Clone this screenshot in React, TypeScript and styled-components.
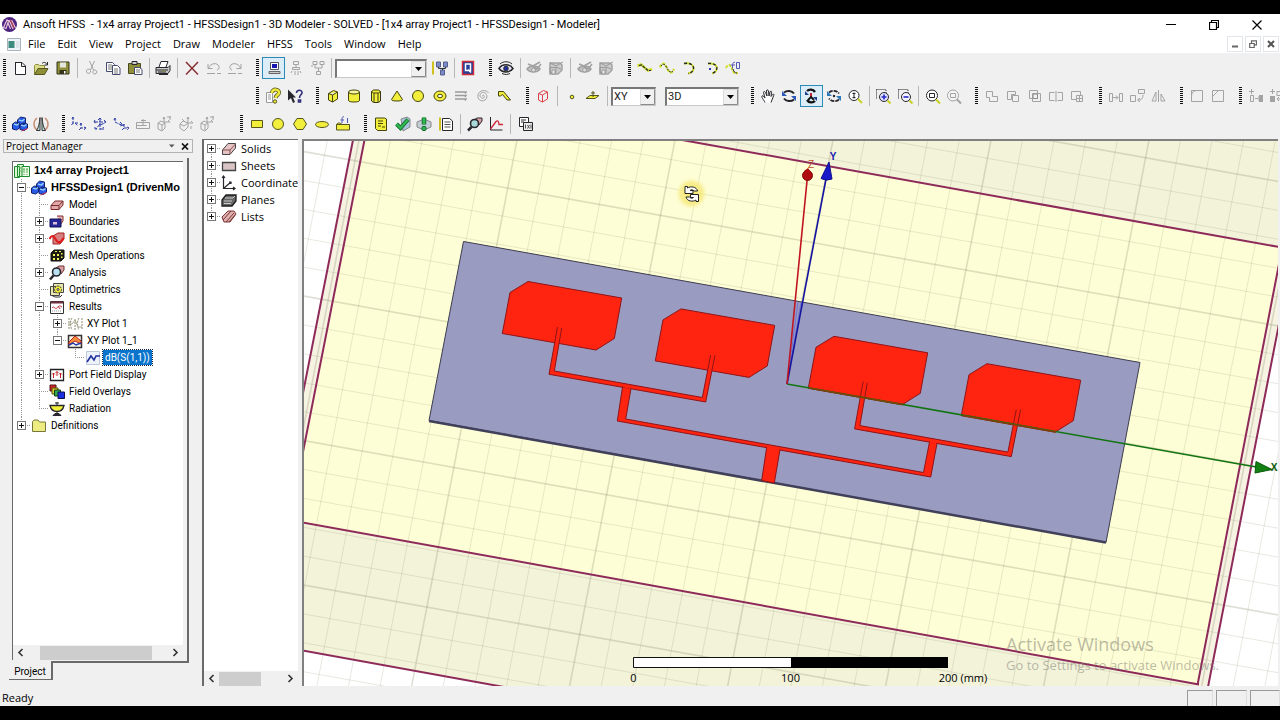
import React from "react";
import styled, { createGlobalStyle, css } from "styled-components";

const Global = createGlobalStyle`
  * { box-sizing: border-box; }
  body { margin: 0; background: #000; overflow: hidden; }
  button { font: inherit; color: inherit; background: none; border: 0; padding: 0; margin: 0; }
  ul { list-style: none; margin: 0; padding: 0; }
`;

const ui = `"Open Sans", "Noto Sans", sans-serif`;
const classic = `Roboto, "Liberation Sans", sans-serif`;

/* ---------- window frame ---------- */

const Screen = styled.div`
  height: 100vh;
  padding: 14px 0;
  background: #000;
  display: flex;
  flex-direction: column;
  font: 11px/14px ${ui};
  color: #000;
  overflow: hidden;
`;
const TitleBar = styled.header`
  flex: none;
  height: 21px;
  background: #fff;
  display: flex;
  align-items: center;
  padding: 0 2px 0 1px;
`;
const Title = styled.h1`
  flex: 1;
  margin: 0 0 0 5px;
  font: 400 11px/20px ${classic};
  white-space: pre;
`;
const WindowButton = styled.button`
  width: 43px;
  height: 20px;
  display: grid;
  place-items: center;
`;
const MenuBar = styled.nav`
  flex: none;
  height: 18px;
  background: #fff;
  display: flex;
  align-items: center;
  padding-left: 7px;
  padding-right: 1px;
`;
const Menus = styled.div`
  flex: 1;
  display: flex;
  gap: 12px;
  padding-left: 7px;
  line-height: 18px;
`;
const ChildButton = styled.button`
  width: 16px;
  height: 16px;
  margin-left: 2px;
  border: 1px solid #e2e6ea;
  display: grid;
  place-items: center;
`;

/* ---------- toolbars ---------- */

const ToolArea = styled.div`
  flex: none;
  background: #f0f0f0;
  padding: 1px 0 1px;
  height: 86px;
`;
const ToolRow = styled.div`
  height: 28px;
  display: flex;
  align-items: center;
  overflow: hidden;
`;
const ToolGroup = styled.div<{ $width: number; $before?: number }>`
  flex: none;
  width: ${(p) => p.$width}px;
  margin-left: ${(p) => p.$before ?? 0}px;
  height: 22px;
  display: flex;
  align-items: center;
`;
const Grip = styled.span`
  flex: none;
  width: 3px;
  height: 18px;
  margin: 0 3px;
  background: repeating-linear-gradient(#111 0 1px, #f0f0f0 1px 2px);
`;
const ToolButton = styled.button<{ $active?: boolean }>`
  flex: 1 1 0;
  min-width: 0;
  height: 22px;
  display: flex;
  align-items: center;
  justify-content: center;
  ${(p) => p.$active && css`background: #dcedf8; border: 1px solid #2a8ab8;`}
  svg { flex: none; }
`;
const Divider = styled.span`
  flex: none;
  width: 1px;
  height: 20px;
  margin: 0 3px;
  background: #b8b8b8;
`;
const Combo = styled.label<{ $width: number; $after?: number }>`
  flex: none;
  position: relative;
  width: ${(p) => p.$width}px;
  margin-right: ${(p) => p.$after ?? 0}px;
  height: 19px;
  border: 1px solid #c8c8c8;
  border-top: 2px solid #777;
  border-left: 2px solid #777;
  background: #fff;
  select {
    appearance: none;
    display: block;
    width: 100%;
    height: 16px;
    border: 0;
    padding: 0 0 0 1px;
    background: #fff;
    color: #222;
    font: 11px/16px ${classic};
  }
  svg {
    position: absolute;
    right: 0;
    top: 0;
    pointer-events: none;
  }
`;

/* ---------- workspace ---------- */

const Workspace = styled.main`
  flex: 1;
  min-height: 0;
  display: flex;
  background: #f0f0f0;
`;
const ProjectPane = styled.section`
  flex: none;
  width: 202px;
  display: flex;
  flex-direction: column;
  padding: 0 9px 7px 3px;
`;
const PaneHeader = styled.h2`
  margin: 0;
  height: 14px;
  flex: none;
  display: flex;
  align-items: center;
  gap: 6px;
  padding: 0 3px 0 2px;
  border: 1px solid #b4b4b4;
  font-size: 10px;
  line-height: 12px;
  font-weight: 400;
  span { flex: 1; }
  button { display: grid; place-items: center; }
`;
const TabFrame = styled.div`
  flex: 1;
  min-height: 0;
  display: flex;
  margin: 5px 4px 0 6px;
  padding: 3px 4px 1px 3px;
  border-right: 2px solid #6a6a6a;
  border-bottom: 2px solid #6a6a6a;
`;
const TreeBox = styled.div<{ $edge?: number }>`
  flex: 1;
  min-width: 0;
  display: flex;
  flex-direction: column;
  background: #fff;
  border-left: ${(p) => p.$edge ?? 1}px solid #6a6a6a;
  border-top: 1px solid #6a6a6a;
  overflow: hidden;
`;
const Tree = styled.ul`
  flex: 1;
  min-height: 0;
  overflow: hidden;
`;
const PaneTab = styled.button`
  flex: none;
  align-self: flex-start;
  width: 44px;
  height: 19px;
  margin: -2px 0 0 6px;
  padding-top: 3px;
  border-right: 2px solid #6a6a6a;
  border-bottom: 1px solid #6a6a6a;
  background: #f0f0f0;
  font: 10px/15px ${classic};
`;
const ModelPane = styled.section`
  flex: none;
  width: 100px;
  display: flex;
  padding-right: 4px;
  padding-bottom: 1px;
`;

const TreeRow = styled.li<{ $level: number; $font: "classic" | "ui" }>`
  display: flex;
  align-items: center;
  height: 17px;
  padding-left: ${(p) => (p.$level === 0 ? 1 : p.$font === "ui" ? 3 : 4)}px;
  white-space: nowrap;
  font: ${(p) => (p.$font === "ui" ? `11px/15px ${ui}` : `10px/15px ${classic}`)};
  & > svg { flex: none; }
`;
const Guide = styled.span<{ $kind: "line" | "tee" | "ell" | "none"; $own?: boolean; $first?: boolean }>`
  flex: none;
  width: ${(p) => (p.$own ? 14 : 18)}px;
  height: 17px;
  display: flex;
  align-items: center;
  background-repeat: no-repeat;
  ${(p) =>
    p.$kind !== "none" &&
    css`
      background-image:
        repeating-linear-gradient(#999 0 1px, transparent 1px 2px),
        repeating-linear-gradient(90deg, #999 0 1px, transparent 1px 2px);
      background-position: 4px ${p.$first ? 8 : 0}px, 4px 8px;
      background-size: 1px ${p.$kind === "ell" ? 8 : 17}px, ${p.$own ? 10 : 0}px 1px;
    `}
`;
const Expander = styled.button`
  width: 9px;
  height: 9px;
  border: 1px solid #777;
  background: #fff;
  display: grid;
  place-items: center;
`;
const Label = styled.span<{ $bold?: boolean; $selected?: boolean }>`
  margin-left: 4px;
  ${(p) => p.$bold && css`font: 700 11px/15px "Liberation Sans", sans-serif;`}
  ${(p) =>
    p.$selected &&
    css`
      margin-left: 2px;
      padding: 0 2px;
      background: #0a74cc;
      color: #fff;
      outline: 1px dotted #124;
    `}
`;

const Scroll = styled.div`
  flex: none;
  height: 15px;
  display: flex;
  align-items: center;
  background: #f0f0f0;
`;
const ScrollArrow = styled.button`
  flex: none;
  width: 15px;
  height: 15px;
  display: grid;
  place-items: center;
`;
const Thumb = styled.span<{ $before: number; $width: number }>`
  flex: none;
  width: ${(p) => p.$width}px;
  height: 14px;
  margin-left: ${(p) => p.$before}px;
  margin-right: auto;
  background: #cdcdcd;
`;

const Viewport = styled.section`
  flex: 1;
  min-width: 0;
  position: relative;
  margin: 0 2px 1px 0;
  border-left: 2px solid #808080;
  border-top: 2px solid #808080;
  background: #fff;
  overflow: hidden;
  & > svg { display: block; width: 100%; height: 100%; }
`;
const Watermark = styled.div`
  position: absolute;
  right: 0;
  bottom: 12px;
  width: 272px;
  color: rgba(120, 120, 110, 0.5);
  font-size: 13px;
  line-height: 18px;
  white-space: nowrap;
  strong { display: block; font-weight: 400; font-size: 18px; line-height: 24px; }
`;

const StatusBar = styled.footer`
  flex: none;
  height: 19px;
  display: flex;
  align-items: center;
  gap: 3px;
  padding: 2px 0 0 2px;
  background: #f0f0f0;
  span { flex: 1; line-height: 16px; }
`;
const StatusCell = styled.div<{ $width: number }>`
  width: ${(p) => p.$width}px;
  height: 16px;
  border-left: 1px solid #999;
  border-top: 1px solid #999;
  border-right: 1px solid #ddd;
`;

/* ---------- icons, drawn on an 18 x 18 grid ---------- */

const K = "#26262c";
const G = "#a3a3a3";
const Y = "#f2ee3c";
const O = "#8f8f3a";
const B = "#2b3aa8";

const shapes: Record<string, React.ReactNode> = {
  new: <path d="M4 3.500h7l3.500 3.500v8.500H4.500V3.500M10.500 3.500v4h4" stroke={K} fill="#fff" />,
  open: <><path d="M2.500 15V6.500l1-1h3l1 1h5V9" stroke={O} fill="#dcdc8c" /><path d="M2.500 15.500L6 9.500h10l-3.500 6z" stroke="#55551c" fill={O} /><path d="M10 4.500c2-2 4-1 5 1M15.500 3v3h-3" stroke={K} /></>,
  save: <><path d="M3 3h12v12H3z" fill={O} stroke="#33331c" /><path d="M6 3.500h6v5H6z" fill="#e6e6e0" /><path d="M5.500 11h7v4h-7z" fill="#33331c" /><path d="M10 12h1.500v2.500H10z" fill="#fff" /></>,
  cut: <path d="M6.500 2l4 9M11.500 2l-4 9M7.500 11.500a2 2 0 1 1-4 1.500a2 2 0 0 1 4-1.500zM10.500 11.500a2 2 0 1 1 0 3a2 2 0 0 1 0-3z" stroke={G} />,
  copy: <><path d="M2.500 3.500h6l2 2v7h-8z" fill="#fff" stroke="#444a70" /><path d="M4 6h4M4 8h4M4 10h4" stroke="#777" /><path d="M8.500 6.500h5l2.500 2.500v6.500H8.500z" fill="#fff" stroke="#444a70" /><path d="M10 10h4M10 12h4M10 14h4" stroke="#777" /></>,
  paste: <><path d="M2.500 4.500h12v10h-12z" fill={O} stroke="#4a4a20" /><path d="M6 2.500h5v3H6z" fill="#ccc" stroke={K} /><path d="M8.500 8.500h5l2.500 2v5H8.500z" fill="#fff" stroke="#444a70" /><path d="M10 11h4M10 13h4" stroke="#777" /></>,
  print: <><path d="M5 8l2-5.500h7L12 8" fill="#fff" stroke={K} /><path d="M2 8.500h12l2-2v5l-2 3H2z" fill="#c8c8c8" stroke={K} /><path d="M2.500 11h11.500M4 13h8M5 15.500h9" stroke={K} /><path d="M8 12h3" stroke={O} /></>,
  del: <path d="M3 3l12 12.500M15 3L3 15.500" stroke="#863034" strokeWidth="1.500" />,
  undo: <path d="M3 5v4.500h4.500M3.500 9c2-5 9-6 10.500-1.500c.5 2-.5 3-2 3.500M2 14.500h8M12 14.500h4" stroke={G} />,
  redo: <path d="M15 5v4.500h-4.500M14.500 9c-2-5-9-6-10.500-1.500c-.5 2 .5 3 2 3.500M2 14.500h8M12 14.500h4" stroke={G} />,
  monitor: <><path d="M5.500 3.500h8v7h-8z" fill="#fff" stroke="#555" /><path d="M7 5h5v4H7z" fill="#1717b0" /><path d="M4 12.500h11v2H4z" fill="#ccc" stroke="#666" /></>,
  net1: <path d="M6.500 2.500h5v3h-5zM9 6v2M5.500 8.500h7v2h-7zM5 12l-1 2M8 12v4M11 12v4M13 12l1 2" stroke={G} />,
  net2: <path d="M4 2.500h4v3H4zM11 2.500h4v3h-4zM6 6v3h7V6M9.500 9v3M7.500 12.500h4v3h-4zM2 7h2" stroke={G} />,
  tree: <><path d="M2 2.500v13" stroke="#d0c020" strokeWidth="2" /><path d="M5.500 3h4v5h-4zM12.500 3h4v5h-4zM9.500 11h4v5h-4z" fill="#7d8cc8" stroke="#55608c" /><path d="M7.500 8v1.500h7V8M11.500 9.500V11" stroke="#333" /></>,
  queue: <><path d="M3.500 2.500h11v13h-11z" fill="#26409a" stroke="#d02a36" strokeWidth="1.400" /><path d="M6.500 5h5v6.500h-5zM9 10.500l3 3" stroke="#fff" strokeWidth="1.500" /></>,
  eye: <><path d="M2 9.500c3-5 11-5 14 0c-3 4.500-11 4.500-14 0z" fill="#e6e6f4" stroke={K} strokeWidth="1.500" /><circle cx="9" cy="9.500" r="2.300" fill="#2030a0" stroke={K} /><path d="M3 5c3-3 9-3 12 0M5 14.500c3 1.500 6 1 8 0" stroke={K} /></>,
  eyeOff: <><path d="M2 10c3-4 10-4 13 0c-3 4-10 4-13 0z" fill="#c4c4c4" stroke={G} strokeWidth="1.500" /><path d="M3 5l5 2l7-4M8 8l4 2l4-5" stroke="#a0a0a0" strokeWidth="1.500" /><circle cx="8.500" cy="11" r="2" fill="#ddd" stroke="#999" /></>,
  eyeBox: <><path d="M3 4h10l2 2v5l-4 4H3z" fill="#ccc" stroke={G} strokeWidth="1.500" /><path d="M3 4l6 3l7-4M3 8.500h6v5H3zM9 8l5 2" stroke="#999" /><path d="M5 11h3v4H5z" fill="#eee" stroke="#999" /></>,
  line1: <><path d="M1.500 7l3.500-1.500l7 6l4-1.500" stroke="#cfdd28" strokeWidth="2.500" /><path d="M3 6.500l2.500-.5l6.500 5.500h3" stroke={K} strokeWidth="1.200" strokeDasharray="3 1" /></>,
  line2: <><path d="M2 8.500C4 3 7 4 9 9s5 6 7 1" stroke="#cfdd28" strokeWidth="2.300" strokeDasharray="3 1" /><path d="M3 7C5 4 7 5 9 9s4 5 6 3" stroke={K} strokeDasharray="2 1" /></>,
  arc1: <><path d="M4 4.500c12-2 12 9 4 10" stroke="#cfdd28" strokeWidth="2" /><path d="M4 4.500c12-2 12 9 4 10" stroke={K} strokeWidth="1.300" strokeDasharray="3 2" /></>,
  arc2: <><path d="M6 4.500c11-1 11 8 4 10" stroke="#cfdd28" strokeWidth="2" /><path d="M6 4.500c11-1 11 8 4 10" stroke={K} strokeWidth="1.300" strokeDasharray="3 2" /><path d="M7 9h2v2H7z" fill={B} /></>,
  eq: <><path d="M2 9c2-5 5-3 6 1s3 5 6 4" stroke="#cfdd28" strokeWidth="2" strokeDasharray="3 1" /><path d="M11 3.500c-2.500-1-2.500 2-2.500 6M6.500 6h4.500M12.500 3.500h3v6h-3z" stroke="#5058b8" /><path d="M9 10c1 3 2 4 4 4" stroke={K} /></>,
  noteHelp: <><path d="M2.500 5.500h6v10h-6zM4 8h3M4 10h3M4 12h3" stroke="#999" fill="#fff" /><path d="M8 6c0-5 8-4 7 0c-1 2.500-3 2-3.500 5" stroke="#55551c" strokeWidth="4" /><path d="M8 6c0-5 8-4 7 0c-1 2.500-3 2-3.500 5" stroke="#f0e83c" strokeWidth="2.500" /><circle cx="11" cy="14.500" r="1.700" fill="#f0e83c" stroke="#55551c" /></>,
  ptrHelp: <><path d="M2 2.500v11l3-2.500l2 5l2-1l-2-4.500h3z" fill={K} /><path d="M10.500 6c0-4 6-3.500 5.500 0c-.5 2-2.500 2-2.500 5M12.500 13h2v2h-2z" stroke="#2e2e78" strokeWidth="1.600" /></>,
  box: <path d="M4.500 6.500l5-3l4 1.500v7l-5 3l-4-2zM4.500 6.500l4 1.500l5-3M8.500 8v7" fill={Y} stroke="#44440c" />,
  cyl: <><path d="M3.500 5v8.500c0 2 11 2 11 0V5" fill={Y} stroke="#44440c" /><ellipse cx="9" cy="5" rx="5.500" ry="2" fill="#f6f6a0" stroke="#44440c" /></>,
  prism: <><path d="M4.500 4.500l2-1.500h5l2 1.500V14l-2 1.500h-5l-2-1.500z" fill={Y} stroke="#3a3a10" /><path d="M4.500 4.500L6.500 6h5l2-1.500M7 6v9M11 6v9" stroke="#3a3a10" /></>,
  cone: <path d="M9 4L3.500 12.500c0 2 11 2 11 0z" fill={Y} stroke="#44440c" />,
  ball: <circle cx="9" cy="9" r="5.500" fill={Y} stroke="#44440c" />,
  torus: <><ellipse cx="9" cy="9" rx="6" ry="5" fill={Y} stroke="#44440c" /><ellipse cx="9" cy="9" rx="2.500" ry="1.700" fill="#fff" stroke="#44440c" /></>,
  helix: <path d="M3 5h11l-1 1.500M3 8.500h11l-1 1.500M3 12h11l-1 1.500" stroke="#999" strokeWidth="1.400" />,
  spiral: <path d="M9 9.500c-1-.5 0-2 1-1c1.500 1.500-1 3.500-2.500 2.500c-3-2-1-6 2-5.500c4 .5 4.500 5.500 1.500 7.500c-4 2.500-8-1-7-5C5 3 12 2 14.500 6" stroke={G} />,
  bond: <path d="M3.500 9V4.500h5l7 8.500h-3.500L7.500 7.500L5.500 9z" fill={Y} stroke="#44440c" />,
  redBox: <path d="M4.500 6.500l5-3l4 1.500v7l-5 3l-4-2zM4.500 6.500l4 1.500l5-3M8.500 8v7" stroke="#e0404c" />,
  dot: <circle cx="9" cy="10" r="1.800" fill={Y} stroke="#55551c" />,
  plane: <><path d="M2 11.500h9l4-3H6z" fill={Y} stroke="#55551c" /><path d="M9 4v6M7 6h4" stroke="#55551c" /></>,
  hand: <path d="M6 15.500C5 13 2 10 3 9s2 1 3 2L4.500 5.500c0-1.500 1.500-1 2 0L8 9L7.500 4c0-1.500 1.500-1.500 2 0L10 9l1-4c.5-1.500 2-1 1.500.5L12 9.500l1.500-2c1-1 2 0 1 1.500L12 15.500" fill="#fff" stroke={K} />,
  rot1: <><path d="M4 5.500c3-2.500 8-2 10 1M14 12.500c-3 2.500-8 2-10-1" stroke={K} strokeWidth="2" /><path d="M2 4v5h5zM16 14V9h-5z" fill="#2c58b8" /></>,
  rot2: <><path d="M5 4c2-2 6-2 8 1M13 14c-2 2-6 2-8-1" stroke="#111" strokeWidth="2.400" /><path d="M9 6v4" stroke="#c02430" strokeWidth="2" /><path d="M6 13l3-3l3 3" stroke="#111" strokeWidth="1.800" /><path d="M3 4v4h4zM15 14v-4h-4z" fill="#1c3c90" /></>,
  rot3: <><path d="M4 5.500c3-2.500 8-2 10 1M14 12.500c-3 2.500-8 2-10-1" stroke={K} strokeWidth="1.700" strokeDasharray="4 1" /><path d="M2 4v5h5zM16 14V9h-5z" fill="#2c78b8" /><circle cx="9" cy="9" r="1.200" fill={K} /></>,
  zoomDyn: <><circle cx="8" cy="8.500" r="5" fill="#fff" stroke={K} /><path d="M8 5.500v6M6.500 6.500h3M6.500 10.500h3" stroke={K} /><path d="M12 12l4 4" stroke="#c8d020" strokeWidth="2" /></>,
  zoomIn: <><path d="M2.500 2.500h9M2.500 2.500v9M12 3v3" stroke={K} strokeDasharray="1 1" /><circle cx="10" cy="10" r="4.500" fill="#dfe2ff" stroke={K} /><path d="M7.500 10h5M10 7.500v5" stroke="#2828c8" strokeWidth="1.600" /><path d="M13.500 13.500l3 3" stroke="#c8d020" strokeWidth="2" /></>,
  zoomOut: <><path d="M2.500 2.500h9M2.500 2.500v9M12 3v3" stroke={K} strokeDasharray="1 1" /><circle cx="10" cy="10" r="4.500" fill="#f4f4ff" stroke={K} /><path d="M7.500 10h5" stroke="#2828c8" strokeWidth="1.600" /><path d="M13.500 13.500l3 3" stroke="#c8d020" strokeWidth="2" /></>,
  fit: <><circle cx="8" cy="8.500" r="5.500" fill="#fff" stroke={K} /><path d="M5.500 6.500h5v4h-5z" stroke={K} /><path d="M12 12.500l4 4" stroke="#c8d020" strokeWidth="2" /></>,
  fitOff: <><circle cx="8" cy="8.500" r="5.500" fill="#f4f4f4" stroke={G} /><path d="M5.500 6.500h5v4h-5z" stroke={G} /><path d="M12 12.500l4 4" stroke={G} strokeWidth="2" /></>,
  unite: <path d="M3.500 4.500h6v5h5v5h-8v-4h-3z" stroke={G} />,
  subtract: <path d="M3.500 4.500h8v3h-4v5h-4zM8.500 8.500h6v6h-6z" stroke={G} />,
  intersect: <><path d="M3.500 3.500h8v8h-8zM6.500 6.500h8v8h-8z" stroke={G} /><path d="M7 7h4.500v4.500H7z" stroke="#8a8a8a" /></>,
  split: <path d="M7.500 5.500h-5v8h5M10.500 5.500h5v8h-5M9 4v11" stroke={G} />,
  imprint: <path d="M12.500 8V4.500h-9v8h5M8.500 8.500h6v6h-6zM11.500 8.500v6M8.500 11.500h6" stroke={G} />,
  move: <path d="M2.500 6.500h3v8h-3zM12.500 6.500h3v8h-3zM6 10.500h5M9 8.500l2 2l-2 2" stroke={G} />,
  rotate: <path d="M2.500 8.500h5v6h-5zM10.500 2.500h6v4h-6zM15 8c0 4-2 5-5 5M12 11l-2.500 2l2.500 2" stroke={G} />,
  mirror: <path d="M9.500 3v12M7 5v9H3zM12 7v7h4z" stroke={G} />,
  fillet: <path d="M3.500 3.500h11v11h-11zM3.500 9.500c0-4 2-6 6-6" stroke={G} />,
  chamfer: <path d="M3.500 3.500h11v11h-11zM3.500 9.500l6-6" stroke={G} />,
  dupLine: <><path d="M2 4.500h5M4.500 2v5M3.500 8.500h3v6h-3zM8 11.500h3M12 9v5" stroke={G} /><path d="M12 8h4v7h-4z" fill={G} /></>,
  dupAxis: <><path d="M2 4.500h5M4.500 2v5M9 4.500h6v4H9zM14 12H9M11 10l-2 2l2 2" stroke={G} /><path d="M2 9h5v6H2z" fill={G} /></>,
  cubes: <><path d="M1.500 9l3-2l4 1v5l-3 2l-4-1zM6.500 5l3-3l5 1v5l-3 2l-5-1zM9 10l3-2l4.500 1v4l-3 2.500l-4.500-1z" fill="#2a5ae8" stroke="#152270" /><path d="M3 9.200l3 .8L8 8.500M8 5.200l3.500 .8L13.500 4M10 10.200l3.500 .8L15.500 9.500" stroke="#9ad8f8" strokeWidth="1.200" /><path d="M10.500 16l6-2.500" stroke="#c03050" /></>,
  mirrorIcon: <><path d="M5 3C1 6 1 12 5 15M13 3c4 3 4 9 0 12" stroke="#c89078" strokeWidth="1.500" /><path d="M8 2.500v13H4.500c2-3 3-7 3.500-13zM10 2.500v13h3.500c-2-3-3-7-3.500-13z" fill="#bce0e0" stroke="#333" /></>,
  cs1: <path d="M3 2v6h5M2 4l1-2l1 2M3 8l-1.500 2M5 8l3 3M11 8v5h5M10 10l1-2l1 2M11 13l-2 2M14 12l2 1l-2 2" stroke={B} strokeDasharray="3 1" />,
  cs2: <path d="M9 3v12M7 5l2-2l2 2M3 7h11M4 5L3 7l2 1M13 5l2 2l-2 1M9 10l5-2M9 9l-4 5M4 12v2h3M9 14h4l-1-2" stroke={B} strokeDasharray="4 1" />,
  cs3: <path d="M2 3v4l4 2M1 5l1-2l1 2M6 9l3 1M7 7l3 3l-3 1M11 9v4h5M10 11l1-2M14 12l2 1l-2 2M11 13l-2 2" stroke={B} strokeDasharray="3 1" />,
  csFace: <path d="M2.500 7.500h13v6h-13zM9 4v7M7 5.500h5M2.500 10.500h10" stroke={G} />,
  csObj1: <><path d="M3 8l3-2l4 2v5l-3 3l-4-2zM3 8l4 2l3-2M7 10v5" stroke={G} /><path d="M9 2v5h6M8 4l1-2l1 2M13 5l2 2M12 2h4M15 1v4" stroke={G} /></>,
  csObj2: <><path d="M3 9l3-3l5 2v4l-4 4l-4-3zM3 9l4 2l4-3" stroke={G} /><path d="M11 2v6h5M10 4l1-2l1 2M14 6l2 2M5 4l3 3M14 11v3" stroke={G} /></>,
  rect: <path d="M3.500 5.500h11v7h-11z" fill={Y} stroke="#55551c" />,
  circle: <circle cx="9" cy="9" r="5.500" fill={Y} stroke="#55551c" />,
  hexagon: <path d="M6 3.500h6l3.500 5.500l-3.500 5.500H6L2.500 9z" fill={Y} stroke="#55551c" />,
  ellipse: <ellipse cx="9" cy="9.500" rx="6.500" ry="3" fill={Y} stroke="#55551c" />,
  surfEq: <><path d="M2.500 9.500h13v5.500h-13zM2.500 9.500c2-3 4-1 6 0" fill={Y} stroke="#55551c" /><path d="M10 2c-2-1-2 1-2 6M6.500 5H10M13.500 3v5" stroke="#5058b8" /></>,
  sheet: <><path d="M3.500 3h9l2 1v11.500h-9l-2-2z" fill={Y} stroke="#44440c" /><path d="M6 6h5M6 8.500h5M6 11h3M10 12h3" stroke="#44440c" /></>,
  check: <><path d="M7 4l6-2l3 2v8l-7 4z" fill="#a8c4dc" stroke="#888" /><path d="M2.500 9l4 4L14 4.500" stroke="#14682c" strokeWidth="4" /><path d="M2.500 9l4 4L14 4.500" stroke="#30b850" strokeWidth="2.300" /></>,
  analyze: <><path d="M2 7l7-3l7 3v5l-7 3l-7-3z" fill="#c4ccd6" stroke="#888" /><path d="M9 2.500v7" stroke="#14682c" strokeWidth="4.500" /><path d="M9 2.500v7" stroke="#30b850" strokeWidth="2.800" /><circle cx="9" cy="13.500" r="2.200" fill="#30b850" stroke="#14682c" /></>,
  report: <><path d="M3 2.500v13" stroke="#d0c020" strokeWidth="2" /><path d="M5.500 3.500h7l3 2.500v9.500h-10z" fill="#fff" stroke={K} /><path d="M7.500 7h6M7.500 9.500h6M7.500 12h6" stroke="#555" strokeWidth="1.200" /></>,
  inspect: <><path d="M8 5l3-2h5v3l-3 4" fill="#d8a0a0" stroke={K} /><circle cx="8.500" cy="8.500" r="4" fill="#a8d8d8" stroke={K} strokeWidth="1.600" /><path d="M5.500 12L2 15.500" stroke={K} strokeWidth="2.500" /></>,
  plot: <><path d="M3.500 2v13h12" stroke={K} /><path d="M3.500 14L9 6.500c2-2 3 1 3 3h4" stroke="#d02838" strokeWidth="1.300" /></>,
  windows: <><path d="M3.500 2.500h9v9h-9zM5 5h5M5 7h3" fill="#fff" stroke={K} /><path d="M7.500 7.500h9v8h-9z" fill="#ececec" stroke={K} /><path d="M9.500 9.500v4M11.500 10l2 3.500M13.500 10l-2 3.500M15 9.500v4" stroke="#555" /></>,

  tProject: <><path d="M1.500 4.500h5v11h-5zM4.500 2.500h6v12h-6z" fill="#d8f4d0" stroke="#1c8c2c" /><path d="M9 4.500h7.500v10H9z" fill="#eefae8" stroke="#1c8c2c" /><path d="M11 6v7M14 6v7M6 6h2M6 9h2M10 8h5" stroke="#50b050" strokeDasharray="2 1" /></>,
  tModel: <><path d="M3 9.500L7 5h8v4l-4 4.500H3z" fill="#e0a8a8" stroke="#7c2c2c" /><path d="M3 9.500h8L15 5M11 9.500v4" stroke="#7c2c2c" /></>,
  tBound: <><path d="M9 3h6v5l-3 4" fill="#e8b0b0" stroke="#803030" /><path d="M2 6h11v8H2z" fill="#26269a" stroke="#101050" /><path d="M5 9h4v2.500H5z" fill="#e0c0d8" /></>,
  tExcite: <><path d="M5 6l5-3h6v6l-4 5H5z" fill="#d88080" stroke="#a02020" /><path d="M1.500 9c2-4 4-4 6 0s5 5 8-1" stroke="#e01818" strokeWidth="2" /></>,
  tMesh: <><path d="M3 6l3-3h10v8l-3 3H3z" fill="#1c1c10" stroke="#111" /><path d="M5 7h2v2H5zM9 7h2v2H9zM5 11h2v2H5zM9 11h2v2H9zM13 6h1.500v1.500H13zM13 9.500h1.500V11H13zM7 4h2v1H7zM11 4h2v1h-2z" fill="#f0f060" /></>,
  tAnalysis: <><path d="M8 4l3-2h5v4l-3 4" fill="#d8a0a0" stroke="#703030" /><circle cx="8.500" cy="8" r="4" fill="#b8e0f0" stroke={K} strokeWidth="1.600" /><path d="M5.500 11.500L2 15.500" stroke={K} strokeWidth="2.500" /></>,
  tOpti: <><path d="M2.500 5.500h9v9h-9zM5.500 2.500h10v9h-10z" fill="#e8e8b0" stroke="#444" /><circle cx="10" cy="8.500" r="3.500" fill={Y} stroke="#333" strokeDasharray="2 1" /><circle cx="10" cy="8.500" r="1" fill="#fff" stroke="#333" /><path d="M4 14.500l3 1.500h5l2-2" stroke="#333" /></>,
  tResults: <><path d="M2.500 3.500h13v12h-13z" fill="#fff" stroke="#333" /><path d="M3 4.500h12" stroke="#703040" strokeWidth="2" /><path d="M4 10c2-3 3 2 5 0s2-3 5-1M10 8l2 3" stroke="#c03040" /><path d="M4 13h10" stroke="#999" strokeDasharray="1 1" /></>,
  tPlot1: <><path d="M3 3v12M6 3c-2 3-2 8 0 12M9 4v11M13 3c-2 3-2 8 0 12M16 3v12" stroke="#8a8a70" strokeDasharray="2 1" /><path d="M2 9h4l3-4l3 7h4" stroke="#a8a890" /></>,
  tPlot2: <><path d="M2.500 3.500h13v12h-13z" fill="#fff8e8" stroke="#333" strokeWidth="1.500" /><path d="M3 10l6-6l6 5v3l-6-3l-6 4z" fill="#f0903c" stroke="#c02020" /><path d="M3 13l4-2l3 2l5-2" stroke="#2038b0" strokeWidth="1.500" /></>,
  tTrace: <><path d="M2.500 2.500h13v13h-13z" fill="#eef2fa" stroke="#c0c8d8" /><path d="M3 13l4-6l3 4l2-4h4" stroke="#2030a0" strokeWidth="1.600" /></>,
  tPort: <><path d="M2.500 3.500h13v11h-13z" fill="#fff" stroke="#222" strokeWidth="1.300" /><path d="M5.500 12V7M4 8.500L5.500 7L7 8.500M9 10V5.500M7.500 7L9 5.500L10.500 7M12.500 12V7M11 8.500L12.500 7L14 8.500" stroke="#c02020" /></>,
  tField: <><path d="M2 2h6v6H2z" fill="#d02828" stroke="#501010" /><path d="M4 5h6v6H4z" fill="#e0d030" stroke="#505010" /><path d="M6.500 7h6v6h-6z" fill="#30a850" stroke="#104010" /><path d="M10 9h6.500v6.500H10z" fill="#1c30e0" stroke="#101050" /></>,
  tRadiation: <><path d="M2 5.500h14c-1 4.500-4 6-7 6S3 10 2 5.500z" fill={Y} stroke={K} strokeWidth="1.300" /><path d="M9 2v3M7 3h4M9 11v3M5 15.500h8l-2-2H7z" stroke={K} fill={K} /></>,
  tFolder: <path d="M2.500 14.500v-10l1.500-1.500h4l1.500 2h6v9.500z" fill="#ecec80" stroke="#77773c" />,
  tSolid: <><path d="M2.500 14.500V10L8 3.500h7.500V8L10 14.500z" fill="#e4c4c4" stroke="#444" /><path d="M2.500 10H10l5.500-6M10 10v4" stroke="#8a5050" /></>,
  tSheet: <path d="M2.500 5.500h13v8h-13z" fill="#d8c4c4" stroke="#444" strokeWidth="1.300" />,
  tCoord: <path d="M3.500 2v12.500h11M2 4l1.500-2L5 4M3.500 14.500L11 8M9 8h2v2M13 13l2 1.500l-2 1.500" stroke={K} strokeWidth="1.200" />,
  tPlanes: <><path d="M2 9l4-5h10v6l-4 5H2z" fill="#666" stroke="#1c1c1c" strokeWidth="1.300" /><path d="M5 7h8M4 10h8M4 12.500h7M13 7l2-2" stroke="#c8c8c8" /></>,
  tLists: <><path d="M2 9l6-6h6l2 3l-6 8H4z" fill="#e0b0b0" stroke="#7c3434" /><path d="M3 12l8-9M6 14l8-9M9 14l6-7" stroke="#7c3434" /></>,
};

const Icon = ({ name }: { name: string }) => (
  <svg width="18" height="18" viewBox="0 0 18 18" fill="none" aria-hidden="true">
    {shapes[name]}
  </svg>
);

const ArrowCap = () => (
  <svg width="15" height="16" viewBox="0 0 15 16" aria-hidden="true">
    <path d="M0 0h15v16H0z" fill="#f0f0f0" />
    <path d="M.5 15.500V.5h14" stroke="#ddd" fill="none" />
    <path d="M.5 15.500h14V.5" stroke="#8a8a8a" fill="none" />
    <path d="M4 6h7L7.500 10z" fill="#000" />
  </svg>
);

const Chevron = ({ flip }: { flip?: boolean }) => (
  <svg width="7" height="9" viewBox="0 0 7 9" fill="none" aria-hidden="true">
    <path d={flip ? "M1.500 1l3.500 3.500L1.500 8" : "M5.500 1L2 4.500L5.500 8"} stroke="#333" strokeWidth="1.600" />
  </svg>
);

type Item = { icon: string; label: string; active?: boolean } | "|";
const t = (icon: string, label: string, active?: boolean): Item => ({ icon, label, active });

const Tools = ({ items }: { items: Item[] }) => (
  <>
    {items.map((it, i) =>
      it === "|" ? (
        <Divider key={i} />
      ) : (
        <ToolButton key={i} type="button" aria-label={it.label} $active={it.active}>
          <Icon name={it.icon} />
        </ToolButton>
      )
    )}
  </>
);

const Group = ({ width, before, items, children }: { width: number; before?: number; items: Item[]; children?: React.ReactNode }) => (
  <ToolGroup $width={width} $before={before} role="toolbar">
    <Grip />
    <Tools items={items} />
    {children}
  </ToolGroup>
);

/* ---------- trees ---------- */

type Kind = "line" | "tee" | "ell" | "none";
type Node = { text: string; icon: string; guides: Kind[]; box?: "+" | "-"; bold?: boolean; selected?: boolean; first?: boolean };

const projectNodes: Node[] = [
  { text: "1x4 array Project1", icon: "tProject", guides: [], bold: true },
  { text: "HFSSDesign1 (DrivenMo", icon: "cubes", guides: ["tee"], box: "-", bold: true },
  { text: "Model", icon: "tModel", guides: ["line", "tee"] },
  { text: "Boundaries", icon: "tBound", guides: ["line", "tee"], box: "+" },
  { text: "Excitations", icon: "tExcite", guides: ["line", "tee"], box: "+" },
  { text: "Mesh Operations", icon: "tMesh", guides: ["line", "tee"] },
  { text: "Analysis", icon: "tAnalysis", guides: ["line", "tee"], box: "+" },
  { text: "Optimetrics", icon: "tOpti", guides: ["line", "tee"] },
  { text: "Results", icon: "tResults", guides: ["line", "tee"], box: "-" },
  { text: "XY Plot 1", icon: "tPlot1", guides: ["line", "line", "tee"], box: "+" },
  { text: "XY Plot 1_1", icon: "tPlot2", guides: ["line", "line", "ell"], box: "-" },
  { text: "dB(S(1,1))", icon: "tTrace", guides: ["line", "line", "none", "ell"], selected: true },
  { text: "Port Field Display", icon: "tPort", guides: ["line", "tee"], box: "+" },
  { text: "Field Overlays", icon: "tField", guides: ["line", "tee"] },
  { text: "Radiation", icon: "tRadiation", guides: ["line", "ell"] },
  { text: "Definitions", icon: "tFolder", guides: ["ell"], box: "+" },
];
const modelNodes: Node[] = [
  { text: "Solids", icon: "tSolid", guides: ["tee"], box: "+", first: true },
  { text: "Sheets", icon: "tSheet", guides: ["tee"], box: "+" },
  { text: "Coordinate", icon: "tCoord", guides: ["tee"], box: "+" },
  { text: "Planes", icon: "tPlanes", guides: ["tee"], box: "+" },
  { text: "Lists", icon: "tLists", guides: ["ell"], box: "+" },
];

const TreeView = ({ nodes, font, label }: { nodes: Node[]; font: "classic" | "ui"; label: string }) => (
  <Tree role="tree" aria-label={label}>
    {nodes.map((n) => (
      <TreeRow key={n.text} role="treeitem" aria-selected={!!n.selected} $level={n.guides.length} $font={font}>
        {n.guides.map((k, i) => (
          <Guide key={i} $kind={k} $own={i === n.guides.length - 1} $first={n.first}>
            {i === n.guides.length - 1 && n.box && (
              <Expander type="button" aria-label={(n.box === "+" ? "Expand " : "Collapse ") + n.text}>
                <svg width="5" height="5" viewBox="0 0 5 5" aria-hidden="true">
                  <path d={n.box === "+" ? "M0 2h5v1H0zM2 0h1v5H2z" : "M0 2h5v1H0z"} fill="#111" />
                </svg>
              </Expander>
            )}
          </Guide>
        ))}
        <svg width="16" height="16" viewBox="1 1 16 16" fill="none" aria-hidden="true">{shapes[n.icon]}</svg>
        <Label $bold={n.bold} $selected={n.selected}>{n.text}</Label>
      </TreeRow>
    ))}
  </Tree>
);

/* ---------- 3D scene ---------- */

const range = (from: number, to: number) => Array.from({ length: to - from + 1 }, (_, i) => from + i);

const Grid = () => (
  <g stroke="#8c8c6c" fill="none">
    {range(-6, 24).map((i) => {
      const y = 151.6 + i * 28.9;
      return <path key={`h${i}`} d={`M304 ${y}L1278 ${y + 174.3}`} strokeWidth={i % 5 === 0 ? 1.6 : 1} opacity={i % 5 === 0 ? 0.28 : 0.2} />;
    })}
    {range(-8, 30).map((i) => {
      const x = 517 + i * 31.6;
      return <path key={`v${i}`} d={`M${x} 140L${x - 105.5} 687`} strokeWidth={i % 5 === 0 ? 1.6 : 1} opacity={i % 5 === 0 ? 0.28 : 0.2} />;
    })}
  </g>
);

const Patch = ({ step }: { step: number }) => (
  <path
    transform={`translate(${step * 153} ${step * 27.4})`}
    d="M510 292.500L528 281.500L621.700 298L614.300 338.500L596 350L502.300 333.500z"
  />
);

const Feed = ({ dx, dy }: { dx: number; dy: number }) => (
  <g transform={`translate(${dx} ${dy})`}>
    <path d="M557.500 327L549 374.300L705.700 402L715 355L710.700 355L702.300 397.500L554.300 371L561.700 328z" stroke="none" />
    <path d="M557.500 327L549 374.300L705.700 402L715 355M561.700 328L554.300 371L702.300 397.500L710.700 355" fill="none" />
  </g>
);

const Scene = () => (
  <svg viewBox="304 141 974 545" preserveAspectRatio="xMidYMid slice" role="img" aria-label="1x4 patch antenna array model">
    <defs>
      <radialGradient id="halo">
        <stop offset="0" stopColor="#f4e468" stopOpacity=".95" />
        <stop offset=".65" stopColor="#f6ea80" stopOpacity=".8" />
        <stop offset="1" stopColor="#fcfad0" stopOpacity="0" />
      </radialGradient>
    </defs>
    <path d="M304 141H1278V686H304z" fill="#fff" />
    <path d="M353 140H1278V327L1208 687H504L303 650V393z" fill="#f3f3da" />
    <path d="M353 140H364.500L303 452V393zM1278 266V327L1208 687H1197z" fill="#f6f3e2" />
    <path d="M364.500 140H682L1278 247V266L1197.500 685L303 522V452z" fill="#fefed6" />
    <Grid />
    <g stroke="#8e2a5a" strokeWidth="2" fill="none">
      <path d="M353 140L303 393M364.500 140L303 452M682 140L1279 247M303 522.500L1199 684.500M303 650.500L504 687M1279 264L1197.500 685M1279 324L1208 687" />
    </g>

    <path d="M463.500 241.500L1140 362.500L1106 542.500L429 420.500z" fill="#9a9bc0" stroke="#3c3c50" />
    <path d="M429 421L1106 542.500" stroke="#40405a" strokeWidth="2.500" />

    <path d="M787 384L798 302M787 384L801 302" stroke="#7070d0" />
    <g fill="#ff2410" stroke="#8e1418">
      {[0, 1, 2, 3].map((s) => <Patch key={s} step={s} />)}
      <Feed dx={0} dy={0} />
      <Feed dx={305.600} dy={54.600} />
      <path d="M622.500 387L617.300 421L930.700 477L937 443.500L929.500 442L923.500 472.500L625.700 419L631 388.500z" />
      <path d="M766.700 447L761.700 480.500L774.300 483L780 449.500z" />
    </g>
    <path d="M623.500 386L630.500 387.500M930 441.500L936.500 443M767 447L779.500 449.500" stroke="#ff2410" strokeWidth="2.500" />

    <path d="M787 384L1256 467" stroke="#127412" strokeWidth="1.600" />
    <path d="M809 388L903 404.500M963 415.500L1056 432" stroke="#7c4208" strokeWidth="1.600" />
    <path d="M1256 461.500L1272 469.500L1255 473z" fill="#128012" stroke="#0a5a0a" />
    <path d="M787 384L826 179" stroke="#1414a0" strokeWidth="1.600" />
    <path d="M829 162L821 178.500Q826 181.500 832 179z" fill="#1a1ac8" stroke="#101090" />
    <path d="M787 384L807.500 176" stroke="#c01420" strokeWidth="1.600" />
    <circle cx="807.500" cy="175.500" r="5" fill="#b00c10" stroke="#800a0c" />
    <path d="M804 171L808 168L811 172z" fill="#b00c10" />
    <g fontFamily='"Liberation Sans", sans-serif' fontSize="10" textAnchor="middle">
      <text x="811" y="168" fill="#b85030">Z</text>
      <text x="833" y="160" fill="#1a1ab0" fontWeight="700">Y</text>
      <text x="1274" y="471" fill="#0a5a0a" fontWeight="700">X</text>
    </g>

    <circle cx="691.500" cy="193.500" r="17" fill="url(#halo)" />
    <path d="M685 186.500h2.500v1.500c3-2 9-1.500 10 3h-3.500c-1-1.500-3-1.500-4-.5h3v3H685zM698.500 201.500H696V200c-3 2-9 1.500-10-3h3.500c1 1.500 3 1.500 4 .5h-3v-3h8z" fill="#fff" stroke="#222" />

    <path d="M633.500 657.500h158v10h-158z" fill="#fff" stroke="#111" />
    <path d="M791 657h157v11H791z" fill="#000" />
    <g fontFamily='"Open Sans", sans-serif' fontSize="11" textAnchor="middle">
      <text x="633.500" y="682">0</text>
      <text x="790.500" y="682">100</text>
      <text x="963" y="682">200 (mm)</text>
    </g>
  </svg>
);

export default function App() {
  return (
    <>
      <Global />
      <Screen>
        <TitleBar>
          <svg width="17" height="17" viewBox="0 0 17 17" aria-hidden="true">
            <circle cx="8.500" cy="8.500" r="7.500" fill="#4c2480" />
            <path d="M2.500 11.500L6 4l1.500 1l-2.500 7.500zM8 4l4 9M10.500 4l4 8M7 7l2.500 6" fill="none" stroke="#e8c4d8" strokeWidth="1.200" />
            <path d="M9.500 4l3.500 8" stroke="#c04858" strokeWidth="1.200" />
          </svg>
          <Title>{"Ansoft HFSS  - 1x4 array Project1 - HFSSDesign1 - 3D Modeler - SOLVED - [1x4 array Project1 - HFSSDesign1 - Modeler]"}</Title>
          <WindowButton type="button" aria-label="Minimize">
            <svg width="10" height="10" viewBox="0 0 10 10"><path d="M0 4h10v1H0z" fill="#000" /></svg>
          </WindowButton>
          <WindowButton type="button" aria-label="Restore">
            <svg width="10" height="10" viewBox="0 0 10 10" fill="none" stroke="#000" strokeWidth="1.200"><path d="M.5 2.500h7v7h-7zM2.500 2.500v-2h7v7h-2" /></svg>
          </WindowButton>
          <WindowButton type="button" aria-label="Close">
            <svg width="10" height="10" viewBox="0 0 10 10" stroke="#000" strokeWidth="1.200"><path d="M.5 .5l9 9M9.500 .5l-9 9" /></svg>
          </WindowButton>
        </TitleBar>
        <MenuBar>
          <svg width="14" height="13" viewBox="0 0 14 13" aria-hidden="true">
            <path d="M.5 .5h13v12H.5z" fill="#f0f4f8" stroke="#a8b4bc" />
            <path d="M1.500 3h6v7h-6z" fill="#3c8c80" />
            <path d="M9 3h3.500v7H9z" fill="#dce4ea" />
          </svg>
          <Menus>
            {["File", "Edit", "View", "Project", "Draw", "Modeler", "HFSS", "Tools", "Window", "Help"].map((m) => (
              <button key={m} type="button">{m}</button>
            ))}
          </Menus>
          <ChildButton type="button" aria-label="Minimize design">
            <svg width="8" height="8" viewBox="0 0 8 8"><path d="M1 5.500h6v2H1z" fill="#666" /></svg>
          </ChildButton>
          <ChildButton type="button" aria-label="Restore design">
            <svg width="8" height="8" viewBox="0 0 8 8" fill="none" stroke="#666" strokeWidth="1.200"><path d="M.7 3.500h4.500v4H.7zM2.500 3V.8h5v4H5.500" /></svg>
          </ChildButton>
          <ChildButton type="button" aria-label="Close design">
            <svg width="8" height="8" viewBox="0 0 8 8" stroke="#555" strokeWidth="2"><path d="M1 1l6 6M7 1L1 7" /></svg>
          </ChildButton>
        </MenuBar>

        <ToolArea>
          <ToolRow>
            <Group width={246} items={[t("new", "New"), t("open", "Open"), t("save", "Save"), "|", t("cut", "Cut"), t("copy", "Copy"), t("paste", "Paste"), "|", t("print", "Print"), "|", t("del", "Delete"), t("undo", "Undo"), t("redo", "Redo")]} />
            <Group width={226} before={7} items={[t("monitor", "Local machine", true), t("net1", "Remote machine"), t("net2", "Distributed machines"), "|"]}>
              <Combo $width={92} $after={2}>
                <select aria-label="Machine list"><option></option></select>
                <ArrowCap />
              </Combo>
              <Tools items={[t("tree", "Edit distributed machines"), "|", t("queue", "Queue")]} />
            </Group>
            <Group width={131} before={7} items={[t("eye", "Visibility"), "|", t("eyeOff", "Hide selection"), t("eyeBox", "Hide selection in view"), "|", t("eyeOff", "Show selection"), t("eyeBox", "Show selection in view")]} />
            <Group width={119} before={8} items={[t("line1", "Draw line"), t("line2", "Draw spline"), t("arc1", "Draw 3 point arc"), t("arc2", "Draw center arc"), t("eq", "Draw equation curve")]} />
          </ToolRow>
          <ToolRow>
            <Group width={53} before={253} items={[t("noteHelp", "Help topics"), t("ptrHelp", "Context help")]} />
            <Group width={202} before={7} items={[t("box", "Box"), t("cyl", "Cylinder"), t("prism", "Regular polyhedron"), t("cone", "Cone"), t("ball", "Sphere"), t("torus", "Torus"), t("helix", "Helix"), t("spiral", "Spiral"), t("bond", "Bondwire")]} />
            <Group width={216} before={8} items={[t("redBox", "Region"), "|", t("dot", "Point"), t("plane", "Plane"), "|"]}>
              <Combo $width={45} $after={9}>
                <select aria-label="Drawing plane"><option>XY</option></select>
                <ArrowCap />
              </Combo>
              <Combo $width={74}>
                <select aria-label="Movement mode"><option>3D</option></select>
                <ArrowCap />
              </Combo>
            </Group>
            <Group width={217} before={9} items={[t("hand", "Pan"), t("rot1", "Rotate around model center"), t("rot2", "Rotate around current axis", true), t("rot3", "Rotate around screen center"), t("zoomDyn", "Dynamic zoom"), "|", t("zoomIn", "Zoom in"), t("zoomOut", "Zoom out"), "|", t("fit", "Fit all"), t("fitOff", "Fit selection")]} />
            <Group width={116} before={7} items={[t("unite", "Unite"), t("subtract", "Subtract"), t("intersect", "Intersect"), t("split", "Split"), t("imprint", "Imprint")]} />
            <Group width={73} before={8} items={[t("move", "Move"), t("rotate", "Rotate"), t("mirror", "Mirror")]} />
            <Group width={51} before={8} items={[t("fillet", "Fillet"), t("chamfer", "Chamfer")]} />
            <Group width={51} before={8} items={[t("dupLine", "Duplicate along line"), t("dupAxis", "Duplicate around axis")]} />
          </ToolRow>
          <ToolRow>
            <Group width={52} items={[t("cubes", "Insert HFSS design"), t("mirrorIcon", "Insert HFSS-IE design")]} />
            <Group width={159} before={7} items={[t("cs1", "Relative offset CS"), t("cs2", "Relative rotated CS"), t("cs3", "Relative both CS"), t("csFace", "Face CS"), t("csObj1", "Object offset CS"), t("csObj2", "Object rotated CS"), t("csObj1", "Object both CS")]} />
            <Group width={117} before={19} items={[t("rect", "Rectangle"), t("circle", "Circle"), t("hexagon", "Regular polygon"), t("ellipse", "Ellipse"), t("surfEq", "Equation surface")]} />
            <Group width={175} before={7} items={[t("sheet", "Setup"), t("check", "Validate"), t("analyze", "Analyze all"), t("report", "Solution data"), "|", t("inspect", "Field inspector"), t("plot", "Create report"), "|", t("windows", "Copy image")]} />
          </ToolRow>
        </ToolArea>

        <Workspace>
          <ProjectPane>
            <PaneHeader>
              <span>Project Manager</span>
              <button type="button" aria-label="Pane options">
                <svg width="6" height="4" viewBox="0 0 6 4"><path d="M0 .5h5.500L2.700 3.500z" fill="#555" /></svg>
              </button>
              <button type="button" aria-label="Close pane">
                <svg width="8" height="7" viewBox="0 0 8 7" stroke="#111" strokeWidth="1.700"><path d="M1 .5l6 6M7 .5l-6 6" /></svg>
              </button>
            </PaneHeader>
            <TabFrame>
              <TreeBox>
                <TreeView nodes={projectNodes} font="classic" label="Project tree" />
                <Scroll>
                  <ScrollArrow type="button" aria-label="Scroll left"><Chevron /></ScrollArrow>
                  <Thumb $before={12} $width={112} />
                  <ScrollArrow type="button" aria-label="Scroll right"><Chevron flip /></ScrollArrow>
                </Scroll>
              </TreeBox>
            </TabFrame>
            <PaneTab type="button">Project</PaneTab>
          </ProjectPane>
          <ModelPane>
            <TreeBox $edge={2}>
              <TreeView nodes={modelNodes} font="ui" label="Model tree" />
              <Scroll>
                <ScrollArrow type="button" aria-label="Scroll left"><Chevron /></ScrollArrow>
                <Thumb $before={0} $width={42} />
                <ScrollArrow type="button" aria-label="Scroll right"><Chevron flip /></ScrollArrow>
              </Scroll>
            </TreeBox>
          </ModelPane>
          <Viewport>
            <Scene />
            <Watermark>
              <strong>Activate Windows</strong>
              Go to Settings to activate Windows.
            </Watermark>
          </Viewport>
        </Workspace>

        <StatusBar>
          <span>Ready</span>
          <StatusCell $width={26} />
          <StatusCell $width={31} />
          <StatusCell $width={30} />
        </StatusBar>
      </Screen>
    </>
  );
}
